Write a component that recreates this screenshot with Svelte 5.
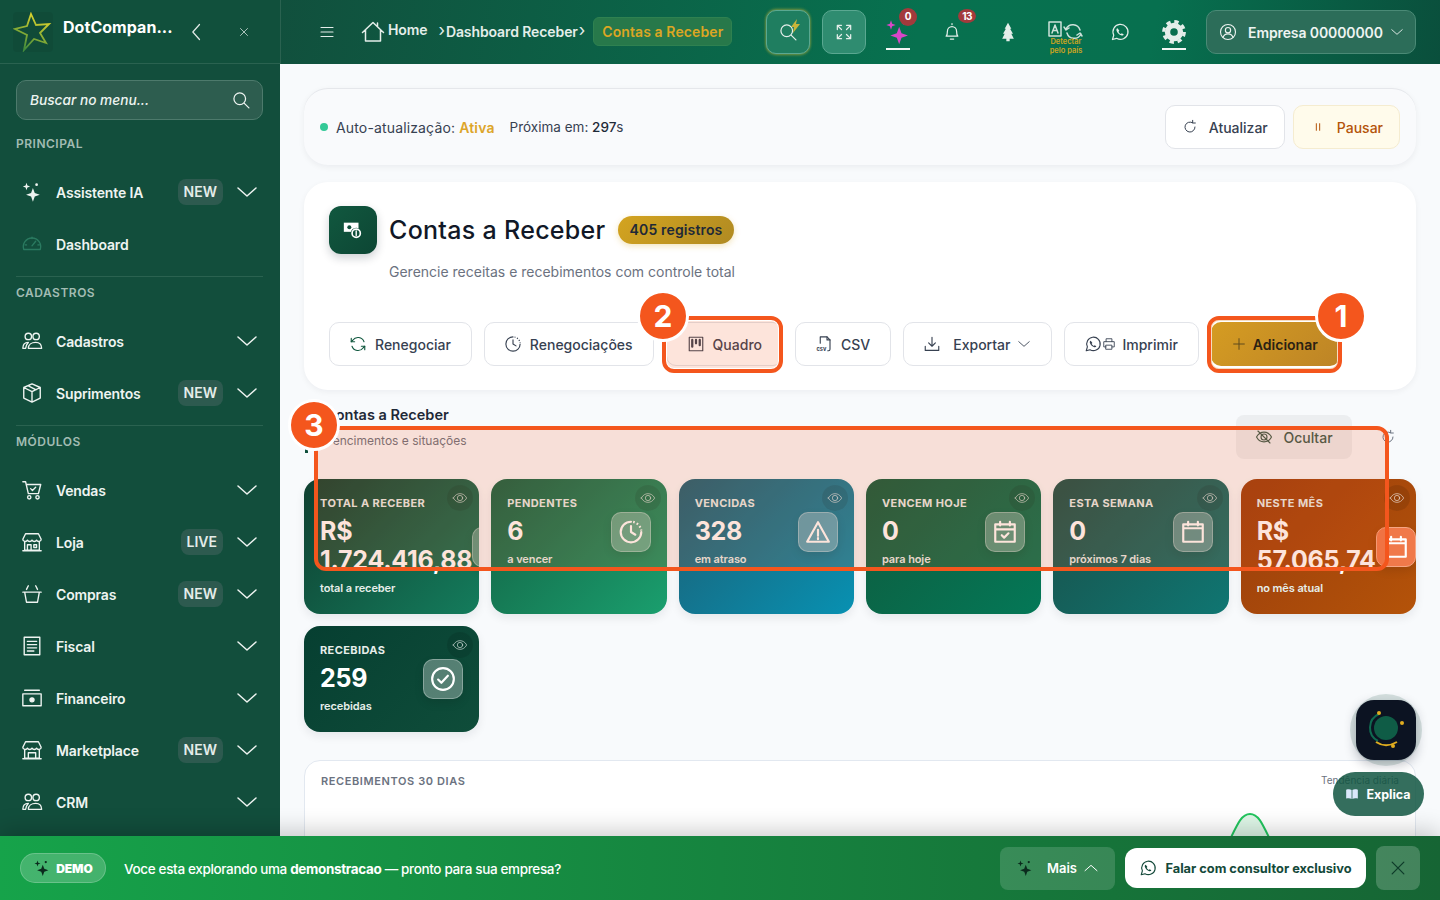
<script lang="ts">
    const icons: Record<string, string> = {
        sparkles: '<g fill="currentColor" stroke="none"><path d="M13 7.500l2 5.500 5.500 2-5.500 2-2 5.500-2-5.500-5.500-2 5.500-2z"/><path d="M6 2l1 3 3 1-3 1-1 3-1-3-3-1 3-1z"/><circle cx="17" cy="4" r="1.500"/></g>',
        gauge: '<path d="M3 18a9.500 9.500 0 1 1 18 0z"/><path d="M12 14l4-5M6 13H4.500M20 13h-1.500M12 6V4.500"/>',
        people: '<circle cx="8" cy="7" r="3.500"/><circle cx="16.500" cy="7" r="3.500"/><path d="M2 20c0-4 2-6.500 6-6.500l-2 3-1 3.500zM8 20c0-4 3.500-6.500 8-6.500s6.500 2.500 6.500 6.500z"/>',
        box: '<path d="M12 2l9 4v11.500L12 22l-9-4.500V6zM3 6l9 4.500L21 6M12 10.500V22M7.500 4l9 4.500"/>',
        cart: '<path d="M2 3h3l3 13h11l2.500-10H6"/><circle cx="9" cy="20" r="1.800"/><circle cx="18" cy="20" r="1.800"/><path d="M10.500 10.500l2 2 3.500-3.500"/>',
        store: '<path d="M5 3h14l3 6c0 3-4 3-5 1-1 2-4 2-5 0-1 2-4 2-5 0-1 2-5 2-5-1zM4 12v9h16v-9M2 21.500h20M7 21v-6h4v6M14 15h3v3h-3z"/>',
        basket: '<path d="M2 10h20M4 10l2 11h12l2-11M8 3L6 7M16 3l2 4"/>',
        receipt: '<path d="M3.500 2.500h17v19h-17z"/><path d="M7 7h10M7 10.500h10M7 14h10M7 17.500h7"/>',
        cash: '<path d="M2 7.500h20v13H2zM4 3.500h16"/><circle cx="12" cy="14" r="2.200" fill="currentColor"/>',
        market: '<path d="M5 3h14l3 6c0 3-4 3-5 1-1 2-4 2-5 0-1 2-4 2-5 0-1 2-5 2-5-1zM4 12v9h16v-9M2 21.500h20M8 21v-6h8v6"/>',
        chevron: '<path d="M3 8l9 8 9-8"/>',
        search: '<circle cx="10.500" cy="10.500" r="7"/><path d="M16 16l5.500 5.500"/>',
        home: '<path d="M1.500 12.500L12 2.500l10.500 10M4.500 10v11h15V10M16.500 3v3.500"/>',
        menu: '<path d="M4 6h16M4 12h16M4 18h16"/>',
        expand: '<path d="M4 9V4h5M4 4l5 5M20 9V4h-5M20 4l-5 5M4 15v5h5M4 20l5-5M20 15v5h-5M20 20l-5-5"/>',
        bell: '<path d="M5 17c1.500-1.500 1.500-3 1.500-6a5.500 5.500 0 0 1 11 0c0 3 0 4.500 1.500 6zM10 20.500h4M12 3V2"/>',
        tree: '<path fill="currentColor" stroke="none" d="M12 1l4 7h-1.500l3.500 6h-2l3 6h-5v3h-4v-3H5l3-6H6l3.500-6H8z"/>',
        whatsapp: '<path d="M3 21l1.500-5.200A9 9 0 1 1 8 19.600z"/><path d="M9 7.500c-1 .4-1.500 1.300-1.300 2.500.6 3 3.200 5.600 6.300 6.200 1.200.2 2.100-.3 2.500-1.300l-2.300-1.400-1.100 1c-1.200-.5-2.400-1.700-2.900-2.900l1-1.100z" fill="currentColor" stroke="none"/>',
        gear: '<circle cx="12" cy="12" r="6" stroke-width="5"/><circle cx="12" cy="12" r="9.500" stroke-width="3" stroke-linecap="butt" stroke-dasharray="4 3.460"/>',
        user: '<circle cx="12" cy="12" r="10"/><circle cx="12" cy="9.500" r="3.500"/><path d="M5.500 19c1-3.500 3.500-4.500 6.500-4.500s5.500 1 6.500 4.500"/>',
        refresh: '<path d="M20 9a8.500 8.500 0 0 0-15-2L3 9M4 15a8.500 8.500 0 0 0 15 2l2-2"/><path d="M3 4.500V9h4.500M21 19.500V15h-4.500"/>',
        rotate: '<path d="M19.500 12a7.500 7.500 0 1 1-3.500-6.300"/><path d="M16 2v4h4"/>',
        clock: '<path d="M12 2.500a9.500 9.500 0 1 0 9.500 9.500"/><path stroke-linecap="butt" stroke-dasharray="1.500 2" d="M14 2.700a9.500 9.500 0 0 1 7.500 8"/><path d="M12 6.500V12l4 2.500"/>',
        kanban: '<path d="M3 3h18v18H3z"/><path d="M7 6.500v9M12 6.500v4.500M17 6.500v7" stroke-width="3"/>',
        csv: '<path d="M7 11V2.500h9l4 4V19a2 2 0 0 1-2 2h-1"/><path d="M16 2.500v4h4"/><text x="2" y="21" font-size="7.500" font-weight="700" font-family="Inter, sans-serif" fill="currentColor" stroke="none">csv</text>',
        download: '<path d="M12 3v12M7.500 10.500L12 15l4.500-4.500M3 15v5.500h18V15"/>',
        printer: '<path d="M7 8V3h10v5M7 17H3V8h18v9h-4M7 14h10v7H7z"/>',
        plus: '<path d="M12 4v16M4 12h16"/>',
        pause: '<path d="M9.500 7v10M14.500 7v10"/>',
        eye: '<path d="M2 12c2.500-4.500 6-6.500 10-6.500s7.500 2 10 6.500c-2.500 4.500-6 6.500-10 6.500S4.500 16.500 2 12z"/><circle cx="12" cy="12" r="4"/>',
        eyeoff: '<path d="M2 12c2.500-4.500 6-6.500 10-6.500s7.500 2 10 6.500c-2.500 4.500-6 6.500-10 6.500S4.500 16.500 2 12z"/><circle cx="12" cy="12" r="4"/><path d="M4 4l16 16"/>',
        alert: '<path d="M12 3l10 18H2z"/><path d="M12 10v5.500M12 17.500v1.200"/>',
        calendarCheck: '<path d="M3 5h18v16H3zM3 9.500h18M7.500 2.500V6M16.500 2.500V6M9 15l2.200 2.200 4-4"/>',
        calendar: '<path d="M3 5h18v16H3zM3 8.500h18M7.500 2.500V6M16.500 2.500V6"/>',
        check: '<circle cx="12" cy="12" r="10"/><path d="M7.500 12.500l3 3 6-6.500"/>',
        close: '<path d="M5 5l14 14M19 5L5 19"/>',
        back: '<path d="M15 3l-8 9 8 9"/>',
        chevronUp: '<path d="M3 16l9-8 9 8"/>',
        money: '<path fill="currentColor" stroke="none" d="M2 4h16v10H2z"/><circle cx="8" cy="9" r="2.200" fill="#0f4f3b" stroke="none"/><circle cx="15.500" cy="15.500" r="6" fill="#0f4f3b" stroke="none"/><circle cx="15.500" cy="15.500" r="4.500" stroke-width="1.800"/><path d="M15.500 13v5" stroke-width="1.500"/>'
    };

    const sections = [
        {
            label: "PRINCIPAL",
            items: [
                { name: "Assistente IA", icon: "sparkles", tag: "NEW", more: true },
                { name: "Dashboard", icon: "gauge", dim: true }
            ]
        },
        {
            label: "CADASTROS",
            items: [
                { name: "Cadastros", icon: "people", more: true },
                { name: "Suprimentos", icon: "box", tag: "NEW", more: true }
            ]
        },
        {
            label: "MÓDULOS",
            items: [
                { name: "Vendas", icon: "cart", more: true },
                { name: "Loja", icon: "store", tag: "LIVE", more: true },
                { name: "Compras", icon: "basket", tag: "NEW", more: true },
                { name: "Fiscal", icon: "receipt", more: true },
                { name: "Financeiro", icon: "cash", more: true },
                { name: "Marketplace", icon: "market", tag: "NEW", more: true },
                { name: "CRM", icon: "people", more: true }
            ]
        }
    ];

    const stats = [
        { label: "TOTAL A RECEBER", value: "R$ 1.724.416,88", note: "total a receber", icon: "clock", tone: "total" },
        { label: "PENDENTES", value: "6", note: "a vencer", icon: "clock", tone: "pending" },
        { label: "VENCIDAS", value: "328", note: "em atraso", icon: "alert", tone: "late" },
        { label: "VENCEM HOJE", value: "0", note: "para hoje", icon: "calendarCheck", tone: "today" },
        { label: "ESTA SEMANA", value: "0", note: "próximos 7 dias", icon: "calendar", tone: "week" },
        { label: "NESTE MÊS", value: "R$ 57.065,74", note: "no mês atual", icon: "calendar", tone: "month" },
        { label: "RECEBIDAS", value: "259", note: "recebidas", icon: "check", tone: "paid" }
    ];
</script>

{#snippet icon(name: string, size: number)}
    <svg class="ico" width={size} height={size} viewBox="0 0 24 24">{@html icons[name]}</svg>
{/snippet}

<div class="shell">
    <div class="body">
        <aside class="sidebar">
            <div class="brand">
                <svg class="logo" width="40" height="40" viewBox="0 0 40 40">
                    <defs>
                        <linearGradient id="star" x1="0.7" y1="0" x2="0.3" y2="1">
                            <stop offset="0" stop-color="#e4d72c" />
                            <stop offset="1" stop-color="#3f8a3c" />
                        </linearGradient>
                    </defs>
                    <rect x="0" y="0" width="40" height="40" rx="4" fill="#000" fill-opacity=".06" />
                    <path
                        d="M18 2l5 11 13-1-9 9 6 10-12-4-10 11 3-15L2 17l12-3z"
                        fill="none"
                        stroke="url(#star)"
                        stroke-width="1.800"
                        stroke-linejoin="miter"
                    />
                </svg>
                <span class="brand-name">DotCompan...</span>
                <button class="brand-btn">{@render icon("back", 20)}</button>
                <button class="brand-btn small">{@render icon("close", 12)}</button>
            </div>
            <div class="menu-search">
                <span>Buscar no menu...</span>
                {@render icon("search", 20)}
            </div>
            {#each sections as section, i}
                {#if i > 0}<hr />{/if}
                <div class="section-label">{section.label}</div>
                {#each section.items as item}
                    <div class="item">
                        <span class="item-icon" class:dim={item.dim}>{@render icon(item.icon, 22)}</span>
                        <span class="item-name">{item.name}</span>
                        {#if item.tag}<span class="tag">{item.tag}</span>{/if}
                        {#if item.more}<span class="chev">{@render icon("chevron", 24)}</span>{/if}
                    </div>
                {/each}
            {/each}
        </aside>

        <div class="main">
            <header class="topbar">
                <div class="crumbs">
                    <span class="burger">{@render icon("menu", 18)}</span>
                    <span class="crumb-home">{@render icon("home", 24)}</span>
                    <span class="home-text">Home</span>
                    <span class="sep first">›</span>
                    <span class="crumb">Dashboard Receber</span>
                    <span class="sep">›</span>
                    <span class="crumb-now">Contas a Receber</span>
                </div>
                <div class="tools">
                    <button class="tool glass glow">
                        {@render icon("search", 20)}
                        <svg class="bolt" width="9" height="14" viewBox="0 0 9 14"><path d="M6 0L0 8h3l-1 6 7-9H5z" fill="#c9b53a" /></svg>
                    </button>
                    <button class="tool glass">{@render icon("expand", 20)}</button>
                    <button class="tool pink">
                        {@render icon("sparkles", 28)}
                        <span class="count">0</span>
                        <span class="underline"></span>
                    </button>
                    <button class="tool">
                        {@render icon("bell", 20)}
                        <span class="count high">13</span>
                    </button>
                    <button class="tool">{@render icon("tree", 20)}</button>
                    <button class="tool">
                        <svg class="ico lang" width="36" height="22" viewBox="0 0 36 22">
                            <path d="M2 2h12v14H2z" />
                            <path d="M5 13l3-8 3 8M6 10.500h4" />
                            <path d="M33 10a7.500 7.500 0 0 0-14-1M20 13a7.500 7.500 0 0 0 14 1M17 7l2 3 3-2M35 16l-2-3-3 2" />
                        </svg>
                        <span class="detect">Detectar<br />pelo país</span>
                    </button>
                    <button class="tool">{@render icon("whatsapp", 20)}</button>
                    <button class="tool">
                        {@render icon("gear", 26)}
                        <span class="underline"></span>
                    </button>
                    <button class="company">
                        {@render icon("user", 18)}
                        <span>Empresa 00000000</span>
                        {@render icon("chevron", 14)}
                    </button>
                </div>
            </header>

            <main class="page">
                <section class="status">
                    <span class="dot"></span>
                    <span>Auto-atualização: <b class="active">Ativa</b></span>
                    <span class="next">Próxima em: <b>297</b>s</span>
                    <div class="status-actions">
                        <button class="btn">{@render icon("rotate", 16)} Atualizar</button>
                        <button class="btn pause">{@render icon("pause", 16)} Pausar</button>
                    </div>
                </section>

                <section class="hero">
                    <div class="hero-head">
                        <div class="hero-icon">{@render icon("money", 22)}</div>
                        <div>
                            <div class="hero-title">
                                <h1>Contas a Receber</h1>
                                <span class="records">405 registros</span>
                            </div>
                            <p class="hero-sub">Gerencie receitas e recebimentos com controle total</p>
                        </div>
                    </div>
                    <div class="actions">
                        <button class="btn"><span class="teal">{@render icon("refresh", 18)}</span> Renegociar</button>
                        <button class="btn">{@render icon("clock", 18)} Renegociações</button>
                        <button class="btn board-btn">{@render icon("kanban", 18)} Quadro</button>
                        <button class="btn">{@render icon("csv", 18)} CSV</button>
                        <button class="btn wide">{@render icon("download", 18)} Exportar {@render icon("chevron", 14)}</button>
                        <button class="btn tight">
                            <span class="pair">{@render icon("whatsapp", 18)}{@render icon("printer", 14)}</span> Imprimir
                        </button>
                        <button class="btn add">{@render icon("plus", 16)} Adicionar</button>
                    </div>
                </section>

                <div class="stats-head">
                    <span class="stats-mark">
                        <svg width="18" height="48" viewBox="0 0 18 48"><path d="M1 44h3v4H1z" fill="#0f4f3b" /></svg>
                    </span>
                    <div>
                        <h2>Contas a Receber</h2>
                        <p>Vencimentos e situações</p>
                    </div>
                    <button class="hide">{@render icon("eyeoff", 18)} Ocultar</button>
                    <span class="reload">{@render icon("rotate", 16)}</span>
                </div>

                <div class="stats">
                    {#each stats as s}
                        <article class="stat {s.tone}">
                            <span class="peek">{@render icon("eye", 16)}</span>
                            <div class="stat-row">
                                <div class="stat-text">
                                    <div class="stat-label">{s.label}</div>
                                    <div class="stat-value">{s.value}</div>
                                    <div class="stat-note">{s.note}</div>
                                </div>
                                <div class="stat-icon">{@render icon(s.icon, 26)}</div>
                            </div>
                        </article>
                    {/each}
                </div>

                <section class="chart">
                    <div class="chart-head">
                        <span class="chart-title">RECEBIMENTOS 30 DIAS</span>
                        <span class="chart-note">Tendência diária</span>
                    </div>
                    <svg class="chart-plot" width="1110" height="60" viewBox="0 0 1110 60">
                        <path d="M915 60C932 26 935 14 945 14S958 26 975 60z" fill="#22c55e" fill-opacity=".15" />
                        <path d="M915 60C932 26 935 14 945 14S958 26 975 60" fill="none" stroke="#22c55e" stroke-width="2" />
                    </svg>
                </section>
            </main>
        </div>
    </div>

    <footer class="demo">
        <span class="demo-chip">
            <span class="ink">{@render icon("sparkles", 18)}</span>
            DEMO
        </span>
        <p>Voce esta explorando uma <b>demonstracao</b> — pronto para sua empresa?</p>
        <button class="demo-more">
            <span class="ink">{@render icon("sparkles", 18)}</span>
            <span>Mais</span>
            {@render icon("chevronUp", 16)}
        </button>
        <button class="demo-talk">{@render icon("whatsapp", 18)} Falar com consultor exclusivo</button>
        <button class="demo-close">{@render icon("close", 20)}</button>
    </footer>

    <!-- camadas flutuantes -->
    <div class="ai-halo">
        <div class="ai-btn">
            <svg width="60" height="60" viewBox="0 0 60 60">
                <circle cx="30" cy="28" r="12" fill="#0f5c46" />
                <path d="M22 41A15 15 0 0 1 23 14" fill="none" stroke="#0f6a50" stroke-width="2" />
                <path d="M20 42c6 4 14 4 21 0" fill="none" stroke="#e0ac1f" stroke-width="2" />
                <circle cx="23" cy="13" r="2" fill="#e0ac1f" />
                <circle cx="46" cy="23" r="2" fill="#e0ac1f" />
                <circle cx="37" cy="46" r="2" fill="#e0ac1f" />
            </svg>
        </div>
    </div>
    <button class="explain">
        <svg width="12" height="10" viewBox="0 0 14 12">
            <path d="M0 1c2.500-.8 5-.8 6.500.3V12C5 11 2.500 11 0 11.500zM14 1c-2.500-.8-5-.8-6.500.3V12c1.500-1 4-1 6.500-.5z" fill="#dbe8fb" />
        </svg>
        Explica
    </button>

    <div class="mark area"></div>
    <div class="mark board"></div>
    <div class="mark plus"></div>
    <span class="pin pin-1">1</span>
    <span class="pin pin-2">2</span>
    <span class="pin pin-3">3</span>
</div>

<style>
    :global(body) {
        overflow: hidden;
        font-family: Inter, "Liberation Sans", sans-serif;
        color: #1f2937;
    }

    .shell {
        position: relative;
        height: 100vh;
        display: flex;
        flex-direction: column;
        overflow: hidden;
    }

    .body {
        flex: 1;
        min-height: 0;
        display: flex;
    }

    .ico {
        flex-shrink: 0;
        fill: none;
        stroke: currentColor;
        stroke-width: 1.5;
        stroke-linecap: round;
        stroke-linejoin: round;
    }

    button {
        font: inherit;
        cursor: pointer;
    }

    /* sidebar */
    .sidebar {
        width: 280px;
        flex-shrink: 0;
        background: #124e3c;
        color: #eef4f1;
        overflow: hidden;
    }

    .brand {
        height: 63px;
        display: flex;
        align-items: center;
        padding-left: 13px;
        border-bottom: 1px solid #2a6250;
        background: #11503c;
    }

    .logo {
        flex-shrink: 0;
    }

    .brand-name {
        margin-left: 10px;
        width: 118px;
        font-size: 16px;
        font-weight: 700;
        letter-spacing: 0.05px;
        color: #fff;
        margin-top: -9px;
    }

    .brand-btn {
        width: 16px;
        height: 16px;
        padding: 0;
        display: flex;
        align-items: center;
        justify-content: center;
        background: none;
        border: none;
        color: #dfe9e5;
        margin-left: 8px;
    }

    .brand-btn.small {
        margin-left: 31px;
    }

    .menu-search {
        margin: 16px 17px 0 16px;
        height: 38px;
        padding: 0 11px 0 13px;
        display: flex;
        align-items: center;
        justify-content: space-between;
        background: #2d5d4f;
        border: 1px solid #4d7a6c;
        border-radius: 10px;
        font-size: 13.7px;
        font-style: italic;
        font-weight: 500;
        color: #eef4f1;
    }

    .section-label {
        height: 16px;
        line-height: 16px;
        margin: 16px 16px 14px;
        font-size: 12px;
        font-weight: 600;
        letter-spacing: 0.5px;
        color: #a2bcb3;
    }

    hr {
        border: none;
        height: 1px;
        background: #2a6250;
        margin: 6px 17px 0 16px;
    }

    hr + .section-label {
        margin-top: 8px;
    }

    .item {
        height: 52px;
        margin: 0 21px 0 21px;
        display: flex;
        align-items: center;
        font-size: 14px;
        font-weight: 600;
        letter-spacing: -0.15px;
    }

    .item-icon {
        width: 22px;
        margin-right: 13px;
        display: flex;
    }

    .item-icon.dim {
        color: #2a7a60;
    }

    .item-name {
        flex: 1;
    }

    .tag {
        height: 26px;
        line-height: 26px;
        padding: 0 6px;
        margin-right: 12px;
        border-radius: 8px;
        background: #2d5a4f;
        font-size: 14px;
        letter-spacing: 0;
        color: #e4ece9;
    }

    .chev {
        display: flex;
    }

    /* topbar */
    .main {
        flex: 1;
        min-width: 0;
        display: flex;
        flex-direction: column;
        background: #f8fafc;
    }

    .topbar {
        height: 64px;
        flex-shrink: 0;
        display: flex;
        align-items: center;
        justify-content: space-between;
        padding: 0 24px 0 37px;
        background: linear-gradient(100deg, #11503d 0%, #07714f 55%, #07704f 75%, #0a4f3c 100%);
        border-left: 1px solid #2a6250;
        box-sizing: border-box;
        color: #e4eeea;
    }

    .crumbs {
        display: flex;
        align-items: center;
        font-size: 14px;
        font-weight: 600;
        letter-spacing: -0.1px;
    }

    .burger {
        display: flex;
        margin-right: 25px;
    }

    .crumb-home {
        display: flex;
        margin-right: 3px;
    }

    .home-text {
        margin-top: -6px;
    }

    .crumb {
        margin-top: -2px;
    }

    .sep {
        font-weight: 400;
        font-size: 17px;
        margin: -4px 1px 0;
    }

    .sep.first {
        margin-left: 11px;
    }

    .crumb-now {
        margin: -2px 0 0 7px;
        height: 27px;
        line-height: 27px;
        padding: 0 8px;
        border: 1px solid #2f8150;
        border-radius: 6px;
        background: #27784a;
        color: #dca623;
        letter-spacing: 0.1px;
    }

    .tools {
        display: flex;
        align-items: center;
        gap: 10px;
    }

    .tool {
        position: relative;
        width: 44px;
        height: 44px;
        padding: 0;
        display: flex;
        align-items: center;
        justify-content: center;
        background: none;
        border: none;
        color: #e4eeea;
    }

    .tool:nth-child(2),
    .tool:nth-child(5) {
        margin-left: 2px;
    }

    .tool:nth-child(6) {
        margin-left: 3px;
    }

    .tool:nth-child(7) {
        margin-left: 1px;
    }

    .tool.glass {
        background: #2f8c70;
        border: 1px solid #5aa891;
        border-radius: 10px;
    }

    .tool.glow {
        background: #1f7e60;
        box-shadow: 0 -1px 3px #c9b53a88, 0 1px 3px #c9b53a88;
    }

    .bolt {
        position: absolute;
        top: 8px;
        right: 9px;
    }

    .tool.pink {
        color: #d946c8;
    }

    .count {
        position: absolute;
        top: -2px;
        right: 3px;
        width: 18px;
        height: 18px;
        line-height: 17px;
        border-radius: 50%;
        background: #a33a3c;
        font-size: 10px;
        font-weight: 700;
        color: #fff;
    }

    .count.high {
        top: -1px;
        right: -2px;
        height: 14px;
        line-height: 14px;
        letter-spacing: -0.6px;
    }

    .underline {
        position: absolute;
        left: 10px;
        right: 10px;
        bottom: 4px;
        height: 2px;
        background: #f3f7f5;
    }

    .lang {
        margin-top: -3px;
        opacity: 0.9;
    }

    .detect {
        position: absolute;
        left: 2px;
        right: 0;
        top: 27px;
        font-size: 7.5px;
        font-weight: 600;
        line-height: 9px;
        color: #cda51f;
    }

    .company {
        width: 210px;
        height: 44px;
        display: flex;
        align-items: center;
        gap: 11px;
        padding: 0 12px;
        background: #2c6d59;
        border: 1px solid #4a8a76;
        border-radius: 10px;
        color: #eef4f1;
        font-size: 14px;
        font-weight: 600;
        letter-spacing: -0.1px;
        white-space: nowrap;
    }

    .company span {
        flex: 1;
        margin-right: -4px;
        text-align: left;
    }

    /* page */
    .page {
        flex: 1;
        min-height: 0;
        overflow: hidden;
        padding: 24px 24px 0;
    }

    .status {
        height: 77px;
        box-sizing: border-box;
        display: flex;
        align-items: center;
        padding: 0 16px;
        background: #f9fafc;
        border-top: 1px solid #e5e7eb;
        border-radius: 24px;
        box-shadow: 0 2px 6px rgba(15, 23, 42, 0.06);
        font-size: 14px;
        letter-spacing: 0.15px;
        color: #374151;
    }

    .dot {
        width: 8px;
        height: 8px;
        margin-right: 8px;
        border-radius: 50%;
        background: #34c997;
    }

    .active {
        font-weight: 600;
        color: #dda52a;
    }

    .next {
        margin-left: 15px;
        font-size: 13.5px;
        letter-spacing: 0;
    }

    .next b {
        font-weight: 500;
        color: #1f2937;
    }

    .status-actions {
        margin-left: auto;
        display: flex;
        gap: 8px;
    }

    .btn {
        height: 44px;
        box-sizing: border-box;
        display: inline-flex;
        align-items: center;
        gap: 11px;
        padding: 0 16px;
        background: #fff;
        border: 1px solid #e2e4e9;
        border-radius: 10px;
        font-size: 14px;
        font-weight: 500;
        letter-spacing: 0;
        color: #374151;
        white-space: nowrap;
    }

    .btn .ico {
        color: #374151;
    }

    .pause {
        background: #fffbeb;
        border-color: #f5ecd0;
        color: #b45309;
    }

    .pause .ico {
        color: #b45309;
    }

    .hero {
        margin-top: 17px;
        height: 208px;
        box-sizing: border-box;
        padding: 24px 25px;
        background: #fff;
        border-radius: 24px;
        box-shadow: 0 2px 6px rgba(15, 23, 42, 0.05);
    }

    .hero-head {
        display: flex;
        gap: 12px;
    }

    .hero-icon {
        width: 48px;
        height: 48px;
        display: flex;
        align-items: center;
        justify-content: center;
        border-radius: 12px;
        background: linear-gradient(135deg, #11583f, #0d4634);
        box-shadow: 0 4px 10px rgba(15, 23, 42, 0.2);
        color: #fff;
    }

    .hero-title {
        height: 48px;
        display: flex;
        align-items: center;
        gap: 12px;
    }

    h1 {
        margin: 0;
        font-size: 25px;
        font-weight: 500;
        letter-spacing: 0.3px;
        color: #111827;
    }

    .records {
        height: 28px;
        line-height: 28px;
        padding: 0 12px;
        border-radius: 14px;
        background: linear-gradient(135deg, #d4a420, #b08a22);
        box-shadow: 0 2px 6px rgba(212, 164, 32, 0.3);
        font-size: 14px;
        font-weight: 600;
        letter-spacing: 0.15px;
        color: #1f2937;
    }

    .hero-sub {
        margin: 10px 0 0;
        line-height: 16px;
        font-size: 14px;
        color: #6b7280;
    }

    .actions {
        margin-top: 42px;
        display: flex;
        gap: 12px;
    }

    .actions .btn {
        gap: 8px;
        padding: 0 20px 0 19px;
    }

    .actions .btn.board-btn {
        padding: 0 20px;
    }

    .actions .btn.wide {
        gap: 7px;
    }

    .wide .ico:first-child {
        margin-right: 5px;
    }

    .actions .btn.tight {
        gap: 6px;
    }

    .teal {
        display: flex;
        color: #11583f;
    }

    .btn .teal .ico {
        color: #11583f;
    }

    .pair {
        display: flex;
        align-items: center;
    }

    .actions .add {
        gap: 6px;
        padding: 0 22px 0 20px;
        border: none;
        background: linear-gradient(135deg, #d59c22, #bd8426);
        color: #2b2113;
        font-weight: 600;
    }

    .add .ico {
        color: #5f4a1c;
    }

    .stats-head {
        position: relative;
        height: 64px;
        margin: 15px 0 10px;
        display: flex;
        align-items: flex-start;
    }

    .stats-mark {
        width: 21px;
        display: flex;
    }

    h2 {
        margin: 0;
        line-height: 20px;
        font-size: 14.5px;
        font-weight: 600;
        color: #1f2937;
    }

    .stats-head p {
        margin: 8px 0 0;
        line-height: 16px;
        font-size: 12px;
        color: #6b7280;
    }

    .hide {
        margin: 10px 0 0 auto;
        width: 116px;
        height: 44px;
        display: flex;
        align-items: center;
        justify-content: center;
        gap: 10px;
        background: #eceef0;
        border: none;
        border-radius: 8px;
        font-size: 14px;
        font-weight: 500;
        color: #3a5a4c;
    }

    .reload {
        margin: 24px 20px 0 28px;
        color: #6b7280;
        display: flex;
    }

    .stats {
        display: grid;
        grid-template-columns: repeat(6, 1fr);
        gap: 12px;
    }

    .stat {
        position: relative;
        overflow: hidden;
        padding: 16px;
        border-radius: 16px;
        box-shadow: 0 4px 10px rgba(15, 23, 42, 0.08);
        color: #fff;
    }

    .stat-row {
        display: flex;
        align-items: center;
        justify-content: space-between;
    }

    .stat-label {
        height: 16px;
        line-height: 16px;
        margin-bottom: 6px;
        font-size: 11px;
        font-weight: 700;
        letter-spacing: 0.4px;
        color: #e6eeea;
        white-space: nowrap;
    }

    .stat-value {
        line-height: 29px;
        font-size: 25px;
        font-weight: 700;
        letter-spacing: -0.25px;
    }

    .stat-note {
        line-height: 18px;
        margin: 4px 0 1px;
        font-size: 11px;
        font-weight: 600;
        letter-spacing: -0.1px;
        color: #e6eeea;
    }

    .stat-icon {
        width: 40px;
        height: 40px;
        flex-shrink: 0;
        box-sizing: border-box;
        display: flex;
        align-items: center;
        justify-content: center;
        border: 1px solid rgba(255, 255, 255, 0.3);
        border-radius: 10px;
        background: rgba(255, 255, 255, 0.3);
        box-shadow: 0 4px 10px rgba(0, 0, 0, 0.1);
    }

    .stat-icon .ico {
        stroke-width: 2;
    }

    .month .stat-icon {
        background: #f0794a;
        border-color: #f6a684;
    }

    .peek {
        position: absolute;
        top: 6px;
        right: 6px;
        width: 26px;
        height: 26px;
        display: flex;
        align-items: center;
        justify-content: center;
        border-radius: 50%;
        background: rgba(0, 0, 0, 0.1);
        color: rgba(255, 255, 255, 0.55);
    }

    .total {
        background: linear-gradient(135deg, #0f3f30, #147c5c);
    }

    .pending {
        background: linear-gradient(135deg, #136043, #1a9f6e);
    }

    .late {
        background: linear-gradient(135deg, #1c5f74, #0891b2);
    }

    .today {
        background: linear-gradient(135deg, #0f5a3d, #047857);
    }

    .week {
        background: linear-gradient(135deg, #1a4f48, #0f7672);
    }

    .month {
        background: linear-gradient(135deg, #9a3d0c, #b45309);
    }

    .paid {
        background: linear-gradient(135deg, #063f31, #0f4d3a);
    }

    .chart {
        margin-top: 28px;
        height: 120px;
        background: #fff;
        border: 1px solid #e2e8f0;
        border-radius: 16px;
    }

    .chart-head {
        display: flex;
        justify-content: space-between;
        padding: 13px 16px 0;
    }

    .chart-title {
        font-size: 11px;
        font-weight: 600;
        letter-spacing: 0.6px;
        color: #6b7280;
    }

    .chart-note {
        font-size: 10px;
        color: #6b7280;
    }

    .chart-plot {
        display: block;
        margin-top: 12px;
    }

    /* demo bar */
    .demo {
        position: relative;
        height: 64px;
        flex-shrink: 0;
        display: flex;
        align-items: center;
        padding: 0 20px;
        background: linear-gradient(90deg, #16a34a, #166534);
        box-shadow: 0 -4px 24px rgba(0, 0, 0, 0.22);
        color: #fff;
    }

    .demo-chip {
        width: 86px;
        height: 30px;
        box-sizing: border-box;
        display: flex;
        align-items: center;
        justify-content: center;
        gap: 5px;
        border: 1px solid rgba(255, 255, 255, 0.2);
        border-radius: 15px;
        background: rgba(255, 255, 255, 0.2);
        font-size: 12px;
        font-weight: 900;
        letter-spacing: -0.1px;
    }

    .ink {
        display: flex;
        color: #0b2a1d;
    }

    .demo p {
        margin: 1px 0 0 18px;
        font-size: 13.5px;
        font-weight: 500;
        letter-spacing: -0.35px;
    }

    .demo p b {
        font-weight: 700;
    }

    .demo-more {
        margin-left: auto;
        width: 115px;
        height: 43px;
        display: flex;
        align-items: center;
        justify-content: center;
        gap: 6px;
        border: none;
        border-radius: 8px;
        background: rgba(255, 255, 255, 0.15);
        font-size: 13px;
        font-weight: 600;
        color: #fff;
    }

    .demo-more .ink {
        margin-right: 7px;
    }

    .demo-talk {
        margin-left: 10px;
        width: 241px;
        height: 40px;
        display: flex;
        align-items: center;
        justify-content: center;
        gap: 8px;
        border: none;
        border-radius: 12px;
        background: #fff;
        font-size: 12.8px;
        font-weight: 700;
        color: #14493a;
    }

    .demo-close {
        margin-left: 10px;
        width: 44px;
        height: 44px;
        display: flex;
        align-items: center;
        justify-content: center;
        border: none;
        border-radius: 8px;
        background: rgba(255, 255, 255, 0.2);
        color: #0e3b2a;
    }

    /* floating */
    .ai-halo {
        position: absolute;
        left: 1350px;
        top: 694px;
        width: 72px;
        height: 72px;
        display: flex;
        align-items: center;
        justify-content: center;
        border-radius: 50%;
        background: rgba(15, 79, 59, 0.15);
    }

    .ai-btn {
        width: 60px;
        height: 60px;
        border-radius: 18px;
        background: #0c1322;
        box-shadow: 0 4px 12px rgba(15, 23, 42, 0.3);
    }

    .explain {
        position: absolute;
        left: 1333px;
        top: 772px;
        width: 91px;
        height: 44px;
        display: flex;
        align-items: center;
        justify-content: center;
        gap: 8px;
        border: none;
        border-radius: 22px;
        background: rgba(17, 85, 65, 0.85);
        font-size: 12.5px;
        font-weight: 700;
        color: #fff;
    }

    /* guia */
    .mark {
        position: absolute;
        box-sizing: border-box;
        border: 4px solid #f4561d;
        border-radius: 12px;
        background: rgba(244, 86, 29, 0.16);
    }

    .area {
        left: 314px;
        top: 426px;
        width: 1075px;
        height: 145px;
    }

    .board {
        left: 662px;
        top: 316px;
        width: 121px;
        height: 57px;
        box-shadow: inset 0 0 0 1px #fff;
    }

    .plus {
        left: 1207px;
        top: 316px;
        width: 135px;
        height: 57px;
        background: none;
        box-shadow: inset 0 0 0 1px #f6dcc0;
    }

    .pin {
        position: absolute;
        width: 46px;
        height: 46px;
        box-sizing: content-box;
        display: flex;
        align-items: center;
        justify-content: center;
        border: 3px solid #fff;
        border-radius: 50%;
        background: #f4561d;
        font-size: 30px;
        font-weight: 700;
        color: #fff;
    }

    .pin-1 {
        left: 1315px;
        top: 290px;
    }

    .pin-2 {
        left: 637px;
        top: 290px;
    }

    .pin-3 {
        left: 288px;
        top: 399px;
    }
</style>
